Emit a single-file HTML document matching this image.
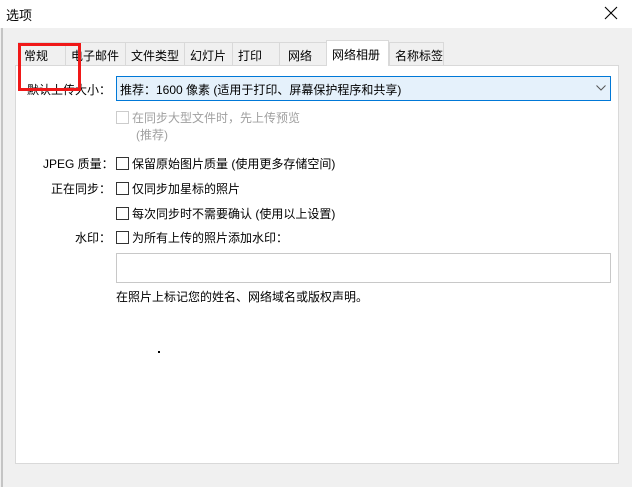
<!DOCTYPE html>
<html><head><meta charset="utf-8"><style>
body{margin:0;width:632px;height:487px;background:#f0f0f0;position:relative;overflow:hidden;font-family:"Liberation Sans","Noto Sans CJK SC",sans-serif;font-size:12px;color:#000}
.a{position:absolute;white-space:nowrap}
.tab{position:absolute;top:42px;height:23px;border:1px solid #d9d9d9;border-bottom:none;background:#f0f0f0;box-sizing:border-box;padding:4px 0 0 5px}
.cb{position:absolute;width:13px;height:13px;border:1px solid #333;box-sizing:border-box;background:#fff}
</style></head><body>
<div class="a" style="left:0;top:0;width:632px;height:28px;background:#fff"></div>
<div class="a" style="left:6px;top:5px;font-size:13px">选项</div>
<svg class="a" style="left:604px;top:6px" width="14" height="14"><path d="M1 1L13 13M13 1L1 13" stroke="#000" stroke-width="1.1"/></svg>
<div class="a" style="left:1px;top:28px;width:2px;height:459px;background:#c4c4c4"></div>
<div class="a" style="left:15px;top:65px;width:604px;height:399px;background:#fff;border:1px solid #d9d9d9;box-sizing:border-box"></div>
<div class="tab" style="left:18px;width:48px">常规</div>
<div class="tab" style="left:65px;width:61px">电子邮件</div>
<div class="tab" style="left:125px;width:60px">文件类型</div>
<div class="tab" style="left:184px;width:49px">幻灯片</div>
<div class="tab" style="left:232px;width:48px">打印</div>
<div class="tab" style="left:279px;width:48px;padding-left:8px">网络</div>
<div class="tab" style="left:389px;width:55px">名称标签</div>
<div class="tab" style="left:326px;top:40px;height:26px;width:63px;background:#fff;padding-top:5px">网络相册</div>
<div class="a" style="left:27px;top:81px">默认上传大小：</div>
<div class="a" style="left:116px;top:76px;width:495px;height:25px;border:1px solid #0078d7;background:#e5f1fb;box-sizing:border-box;padding:4px 0 0 3px">推荐：1600 像素 (适用于打印、屏幕保护程序和共享)</div>
<svg class="a" style="left:596px;top:85px" width="10" height="6"><path d="M0.5 0.5L5 5L9.5 0.5" stroke="#555" fill="none"/></svg>
<div class="cb" style="left:116px;top:111px;border-color:#ccc"></div>
<div class="a" style="left:132px;top:109px;color:#a0a0a0">在同步大型文件时，先上传预览</div>
<div class="a" style="left:136px;top:126px;color:#a0a0a0">(推荐)</div>
<div class="a" style="left:43px;top:155px">JPEG 质量：</div>
<div class="cb" style="left:116px;top:157px"></div>
<div class="a" style="left:132px;top:155px">保留原始图片质量 (使用更多存储空间)</div>
<div class="a" style="left:51px;top:180px">正在同步：</div>
<div class="cb" style="left:116px;top:182px"></div>
<div class="a" style="left:132px;top:180px">仅同步加星标的照片</div>
<div class="cb" style="left:116px;top:207px"></div>
<div class="a" style="left:132px;top:205px">每次同步时不需要确认 (使用以上设置)</div>
<div class="a" style="left:75px;top:229px">水印：</div>
<div class="cb" style="left:116px;top:231px"></div>
<div class="a" style="left:132px;top:229px">为所有上传的照片添加水印：</div>
<div class="a" style="left:116px;top:253px;width:495px;height:30px;border:1px solid #c8c8c8;box-sizing:border-box"></div>
<div class="a" style="left:116px;top:288px">在照片上标记您的姓名、网络域名或版权声明。</div>
<div class="a" style="left:158px;top:351px;width:2px;height:2px;background:#000"></div>
<div class="a" style="left:18px;top:43px;width:63px;height:48px;border:3px solid #f01818;box-sizing:border-box"></div>
</body></html>
